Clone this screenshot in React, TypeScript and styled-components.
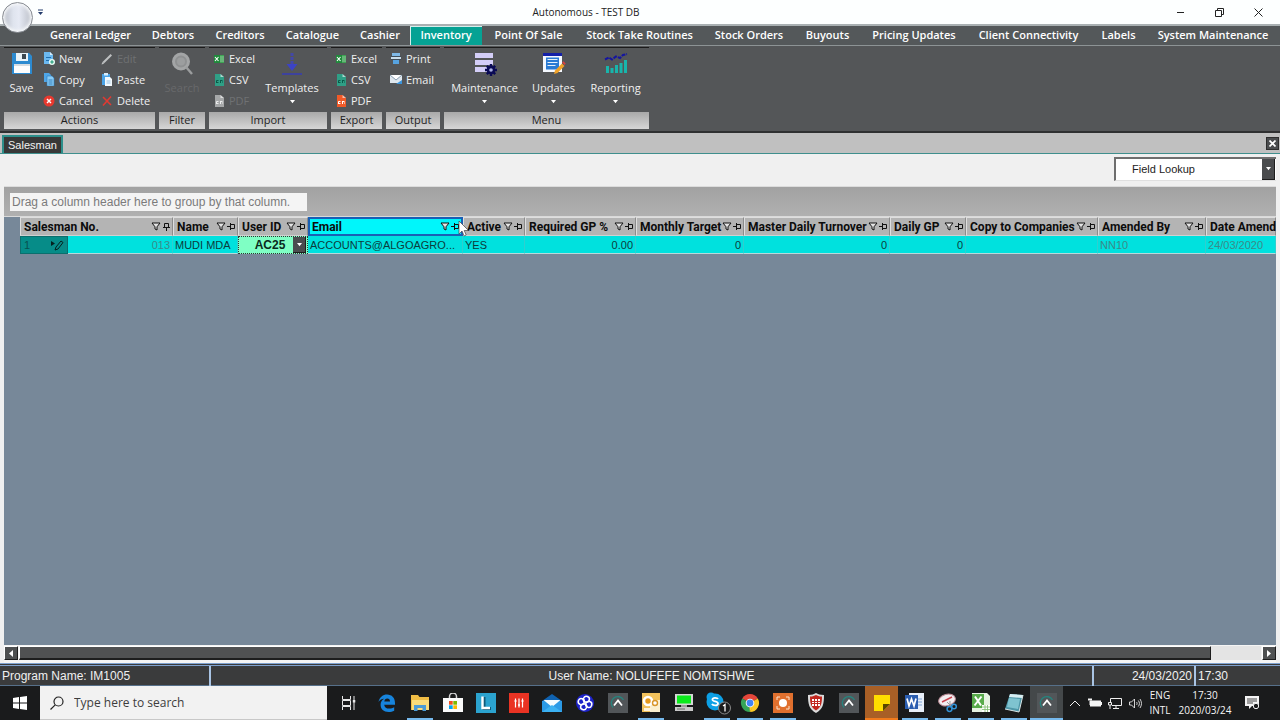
import React from "react";
import styled, { createGlobalStyle, css } from "styled-components";

const UI = `"Open Sans", "Noto Sans", sans-serif`;
const ARIAL = `"Liberation Sans", Arial, sans-serif`;

const GlobalStyle = createGlobalStyle`
  * { box-sizing: border-box; }
  body { margin: 0; background: #f0f0f0; }
  button, select, input { font: inherit; color: inherit; margin: 0; padding: 0; border: 0; background: none; border-radius: 0; }
  svg { display: block; flex: none; }
`;

const Window = styled.div`
  position: relative;
  display: flex;
  flex-direction: column;
  min-height: 100vh;
  overflow: hidden;
  font-family: ${UI};
  font-size: 11px;
  line-height: 16px;
`;

/* Title bar */

const TitleBar = styled.header`
  display: grid;
  grid-template-columns: 1fr auto 1fr;
  align-items: center;
  height: 24px;
  background: #fdffff;
  color: #222;
`;
const QuickAccess = styled.button`
  justify-self: start;
  && { margin-left: 37px; }
`;
const Title = styled.h1`
  margin: 0;
  padding-right: 108px;
  font-size: 10px;
  font-weight: 400;
`;
const WindowButtons = styled.div`
  display: flex;
  justify-self: end;
  padding-right: 2px;
`;
const WindowButton = styled.button`
  display: flex;
  align-items: center;
  justify-content: center;
  width: 39px;
  height: 24px;
`;
const Orb = styled.button`
  position: absolute;
  z-index: 2;
  left: 2px;
  top: 2px;
  width: 31px;
  height: 31px;
  && {
    border: 1px solid #8b8f95;
    border-radius: 50%;
    background: linear-gradient(90deg, #b5bac4 0%, #dfe4ee 35%, #e6eaf4 55%, #b9bdc6 100%);
    box-shadow: inset 0 0 3px 2px #f4f6f8;
  }
`;

/* Module tabs */

const ModuleTabs = styled.nav`
  display: flex;
  height: 22px;
  padding: 0 1px 0 40px;
  border-top: 2px solid #a9b0b2;
  border-bottom: 1px solid #8d9395;
  background: #54585a;
`;
const ModuleTab = styled.button<{ $w: number; $active?: boolean }>`
  && {
    flex: ${(p) => p.$w} 1 0;
    padding-bottom: 2px;
    color: #fff;
    font-size: 11px;
    font-weight: 600;
    white-space: nowrap;
    background: ${(p) => (p.$active ? "#05a294" : "transparent")};
    box-shadow: ${(p) => (p.$active ? "inset 1px 1px 0 #d7efec" : "none")};
  }
`;

/* Ribbon */

const Ribbon = styled.section`
  display: flex;
  gap: 4px;
  height: 87px;
  padding: 1px 3px 2px 4px;
  border-bottom: 2px solid #2f3031;
  background: #545658;
  color: #f0f0f0;
`;
const Group = styled.div<{ $w: number }>`
  display: flex;
  flex-direction: column;
  width: ${(p) => p.$w}px;
  border-top: 1px solid #1b1b1b;
`;
const GroupBody = styled.div`
  display: flex;
  flex: 1;
`;
const GroupLabel = styled.div`
  height: 17px;
  background: linear-gradient(#a9a9a9, #d6d6d6);
  color: #1f1f1f;
  text-align: center;
`;
const CommandColumn = styled.div<{ $w: number }>`
  display: flex;
  flex-direction: column;
  width: ${(p) => p.$w}px;
`;
const Command = styled.button`
  display: flex;
  align-items: center;
  gap: 4px;
  height: 21px;
  white-space: nowrap;
  && { padding-left: 4px; }
  &:disabled { color: #6f7173; }
`;
const BigCommand = styled.button<{ $w: number }>`
  display: flex;
  flex-direction: column;
  align-items: center;
  width: ${(p) => p.$w}px;
  && { padding-top: 4px; }
  & > span { margin-top: 4px; }
  & > span + svg { margin-top: 4px; }
  &:disabled { color: #68696b; }
`;

/* Document tabs and lookup bar */

const DocumentTabs = styled.div`
  display: flex;
  justify-content: space-between;
  align-items: flex-end;
  height: 21px;
  padding: 0 1px 0 2px;
  border-bottom: 1px solid #3f8f8d;
  background: #c0c0c0;
  font-family: ${ARIAL};
`;
const DocumentTab = styled.button`
  && {
    height: 18px;
    padding: 0 4px;
    border: 2px solid #2c8f8b;
    border-bottom: 0;
    background: #383838;
    color: #f2f2f2;
  }
`;
const CloseTab = styled.button`
  display: flex;
  align-items: center;
  justify-content: center;
  align-self: center;
  width: 13px;
  height: 13px;
  && { background: #4a4c4e; border: 1px solid #2d2d2d; }
`;
const LookupBar = styled.div`
  display: flex;
  justify-content: flex-end;
  height: 32px;
  padding: 3px 4px 0;
  background: #f0f0f0;
`;
const LookupBox = styled.div`
  display: flex;
  width: 162px;
  height: 24px;
  padding-right: 1px;
  border: 2px solid #6e6e6e;
  border-right: 0;
  border-bottom: 1px solid #e0e0e0;
  background: #fff;
  font-family: ${ARIAL};
`;
const LookupSelect = styled.select`
  appearance: none;
  flex: 1;
  min-width: 0;
  && { padding: 0 0 2px 16px; color: #222; }
`;
const DropMark = styled.span`
  display: flex;
  align-items: center;
  justify-content: center;
  width: 13px;
  background: #4a4c4e;
  border-right: 1px solid #1d1d1d;
  border-bottom: 1px solid #1d1d1d;
  pointer-events: none;
`;

/* Data grid */

const GridPanel = styled.main`
  display: flex;
  flex: 1;
  flex-direction: column;
  margin: 0 4px;
  border-top: 1px solid #dcdcdc;
  overflow: hidden;
  background: #778899;
  font-family: ${ARIAL};
`;
const GroupByBar = styled.div`
  display: flex;
  align-items: center;
  height: 30px;
  padding: 0 6px;
  border-bottom: 1px solid #d9d9d9;
  background: linear-gradient(#a2a2a2, #b0b0b0);
`;
const GroupByHint = styled.span`
  width: 297px;
  height: 18px;
  padding-left: 2px;
  background: #f4f4f4;
  color: #7b7b7b;
  font-size: 12px;
  line-height: 18px;
`;
const Table = styled.table`
  width: calc(100% - 16px);
  margin-left: 16px;
  border-collapse: separate;
  border-spacing: 0;
  table-layout: fixed;
`;
const HeadCell = styled.th<{ $active?: boolean }>`
  position: relative;
  height: 19px;
  padding: 0;
  border: 1px solid;
  border-color: #dedede #8c8c8c #d0d0d0 #dedede;
  background: #b4b4b4;
  color: #0c0c0c;
  font-family: Roboto, ${ARIAL};
  font-size: 12px;
  font-weight: 700;
  text-align: left;
  ${(p) =>
    p.$active &&
    css`
      border: 2px solid #1a5fb4;
      background: #00f6fb;
    `}
`;
const HeadContent = styled.div<{ $active?: boolean }>`
  display: flex;
  align-items: center;
  gap: 1px;
  height: ${(p) => (p.$active ? 15 : 17)}px;
  padding: 0 1px 0 ${(p) => (p.$active ? 2 : 3)}px;
  white-space: nowrap;
  & > span { flex: 1; min-width: 0; }
`;
const Cell = styled.td<{ $right?: boolean; $dim?: boolean }>`
  height: 18px;
  padding: 0 2px;
  border-right: 1px solid #2fcfcf;
  border-bottom: 1px solid #b7d9da;
  background: #00e1de;
  color: ${(p) => (p.$dim ? "#3c8a88" : "#0d3b3b")};
  font-size: 11px;
  text-align: ${(p) => (p.$right ? "right" : "left")};
  white-space: nowrap;
`;
const RowMarker = styled.th`
  padding: 0 3px;
  border: 1px solid #0b6f6d;
  background: #068c88;
  color: #075250;
  font-size: 11px;
  font-weight: 400;
`;
const RowMarkerContent = styled.div`
  display: flex;
  justify-content: space-between;
  align-items: center;
`;
const EditCell = styled.td`
  padding: 0;
`;
const EditBox = styled.div`
  display: flex;
  height: 18px;
  padding-right: 1px;
  border: 1px dotted #333;
  background: #7fffc4;
`;
const EditSelect = styled.select`
  appearance: none;
  flex: 1;
  min-width: 0;
  && {
    color: #0a2a1c;
    font-size: 12px;
    font-weight: 700;
    text-align-last: center;
    padding-left: 8px;
  }
`;
const Pointer = styled.svg`
  position: absolute;
  z-index: 3;
  top: 1px;
  right: -9px;
`;

/* Scroll bar */

const ScrollBar = styled.div`
  display: flex;
  gap: 1px;
  height: 18px;
  margin: 0 4px;
  padding: 1px 0 3px;
  background: #f4f4f4;
`;
const ScrollArrow = styled.button`
  display: flex;
  align-items: center;
  justify-content: center;
  width: 14px;
  && {
    background: #4e5051;
    border: 1px solid #fff;
    border-right-color: #1d1d1d;
    border-bottom-color: #1d1d1d;
  }
`;
const ScrollTrack = styled.div`
  flex: 1;
  background: #e4e4e4;
`;
const ScrollThumb = styled.div`
  width: 96%;
  height: 100%;
  background: #505152;
  border: 1px solid #fff;
  border-right-color: #1d1d1d;
  border-bottom: 2px solid #1d1d1d;
`;

/* Status bar */

const StatusBar = styled.footer`
  display: grid;
  grid-template-columns: 211px 1fr 102px 84px;
  height: 23px;
  border-top: 3px double #7ea1cf;
  border-bottom: 1px solid #56708a;
  background: #3a3b3c;
  color: #f0f0f0;
  font-family: ${ARIAL};
  font-size: 12px;
  line-height: 20px;
`;
const StatusCell = styled.div<{ $align?: string }>`
  padding: 0 2px;
  border-right: 2px solid #a9c4e4;
  text-align: ${(p) => p.$align || "left"};
  white-space: nowrap;
  &:last-child { border-right: 0; }
`;

/* Taskbar */

const Taskbar = styled.div`
  display: flex;
  height: 34px;
  background: #1a1b1c;
  color: #f5f5f5;
`;
const TaskButton = styled.button<{ $w?: number; $bg?: string }>`
  display: flex;
  align-items: center;
  justify-content: center;
  width: ${(p) => p.$w || 33}px;
  && { background: ${(p) => p.$bg || "transparent"}; }
`;
const AppButton = styled(TaskButton)<{ $line?: string }>`
  && {
    border-top: 2px solid transparent;
    border-bottom: 2px solid transparent;
    background: linear-gradient(${(p) => p.$line || "transparent"}, ${(p) => p.$line || "transparent"}) center bottom /
      ${(p) => (p.$bg ? "100%" : "26px")} 2px no-repeat border-box ${(p) => p.$bg || "transparent"};
  }
`;
const SearchBox = styled.label`
  display: flex;
  align-items: center;
  gap: 10px;
  width: 287px;
  padding-left: 10px;
  border-bottom: 1px solid #c8c8c8;
  background: #f2f2f2;
`;
const SearchInput = styled.input`
  flex: 1;
  min-width: 0;
  && { font-size: 12px; }
  &::placeholder { color: #3d3d3d; opacity: 1; }
`;
const Tray = styled.div`
  display: flex;
  margin-left: auto;
  padding-right: 11px;
`;
const TrayText = styled.div<{ $w: number }>`
  width: ${(p) => p.$w}px;
  padding-top: 2px;
  font-size: 10px;
  line-height: 15px;
  text-align: center;
`;

/* Icons */

const Caret = ({ color = "#fff" }: { color?: string }) => (
  <svg width="7" height="4" viewBox="0 0 7 4"><path d="M1 0h5L3.500 3.200z" fill={color} /></svg>
);
const SaveIcon = () => (
  <svg width="24" height="24" viewBox="0 0 24 24">
    <path d="M2 1h17l3 3v18H2z" fill="#2c8ad0" />
    <path d="M6 1h12v8H6z" fill="#e8f2f8" /><path d="M12 2h4v5h-4z" fill="#3b4750" />
    <path d="M4 12h16v9H4z" fill="#fdfdfd" /><path d="M4 12h16v2H4z" fill="#d5dce2" />
  </svg>
);
const NewIcon = () => (
  <svg width="12" height="13" viewBox="0 0 12 13">
    <path d="M1 0h6l3 3v9H1z" fill="#6cb9f0" /><path d="M7 0l3 3H7z" fill="#d6ecfb" />
    <path d="M3 5.500h5M3 8.500h3" stroke="#1f6fb0" /><circle cx="9" cy="10" r="3" fill="#e9fbf5" />
    <path d="M9 8.200v3.600M7.200 10h3.600" stroke="#1e9b79" strokeWidth="1.200" />
  </svg>
);
const CopyIcon = () => (
  <svg width="12" height="13" viewBox="0 0 12 13">
    <path d="M1 0h5l2 2v7H1z" fill="#4fa6e8" /><path d="M4 3h5l2 2v8H4z" fill="#8accf6" stroke="#2a78b8" strokeWidth=".6" />
    <path d="M5.500 7h4M5.500 9h4M5.500 11h4" stroke="#1f6fb0" strokeWidth=".8" />
  </svg>
);
const CancelIcon = () => (
  <svg width="12" height="12" viewBox="0 0 12 12">
    <circle cx="6" cy="6" r="5.500" fill="#e8392f" /><path d="M4 4l4 4M8 4l-4 4" stroke="#fff" strokeWidth="1.400" />
  </svg>
);
const EditIcon = () => (
  <svg width="12" height="12" viewBox="0 0 12 12"><path d="M2.200 9.800L10.300 1.700" stroke="#bfc1c2" strokeWidth="2" /><path d="M.5 11.500l.8-2.600 1.800 1.800z" fill="#bfc1c2" /></svg>
);
const PasteIcon = () => (
  <svg width="12" height="13" viewBox="0 0 12 13">
    <path d="M1 1h8v11H1z" fill="#4ba3e6" /><path d="M3 0h4v2.500H3z" fill="#d8ecfa" />
    <path d="M4 4h5l2 2v7H4z" fill="#f3f9fd" /><path d="M5.500 8h4M5.500 10h4" stroke="#7db5de" strokeWidth=".8" />
  </svg>
);
const DeleteIcon = () => (
  <svg width="12" height="12" viewBox="0 0 12 12"><path d="M2 2l8 8M10 1.500L2 10.500" stroke="#e03a32" strokeWidth="1.600" /></svg>
);
const SearchBigIcon = () => (
  <svg width="24" height="24" viewBox="0 0 24 24">
    <circle cx="11" cy="9.500" r="7.500" fill="#8f9192" stroke="#a3a5a6" strokeWidth="3" /><circle cx="11" cy="9.500" r="4" fill="#9c9e9f" />
    <path d="M16 15l6 7" stroke="#9b9d9e" strokeWidth="2.400" />
  </svg>
);
const ExcelIcon = () => (
  <svg width="12" height="12" viewBox="0 0 12 12">
    <path d="M1 2h6v8H1z" fill="#1f8a3b" /><path d="M7 2h4v8H7z" fill="#3fa354" />
    <path d="M2 4l3.500 4M5.500 4L2 8" stroke="#fff" strokeWidth="1.100" /><path d="M7.500 4h1M9.500 4h1M7.500 6h1M9.500 6h1M7.500 8h1M9.500 8h1" stroke="#dff3e3" strokeWidth="1" />
  </svg>
);
const FileIcon = ({ color, mark }: { color: string; mark: string }) => (
  <svg width="12" height="13" viewBox="0 0 12 13">
    <path d="M2 1h5.500L11 4v9H2z" fill={color} /><path d="M7.500 1L11 4H7.500z" fill="#fff" opacity=".6" />
    <path d="M3.500 7.500h2M3.500 7.500v2.500M3.500 9.500h2M7 7.500h2.500M7.500 7.500v2.500M9.500 8.500v1" stroke={mark} strokeWidth="1" fill="none" />
  </svg>
);
const TemplatesIcon = () => (
  <svg width="24" height="24" viewBox="0 0 24 24">
    <path d="M12 1v12" stroke="#4348a8" strokeWidth="3" strokeDasharray="3 1" /><path d="M6.500 12h11L12 19z" fill="#3c43c4" />
    <path d="M2 22h20" stroke="#3d429d" strokeWidth="2" />
  </svg>
);
const PrintIcon = () => (
  <svg width="12" height="13" viewBox="0 0 12 13">
    <path d="M2 1h8v3H2z" fill="#7fb8e6" /><path d="M1 4h10v4H1z" fill="#3f4c58" /><path d="M1 5h10v2H1z" fill="#c9dcea" />
    <path d="M3 8h6v4H3z" fill="#57a3e0" />
  </svg>
);
const EmailIcon = () => (
  <svg width="12" height="11" viewBox="0 0 12 11">
    <path d="M0 1h12v8H0z" fill="#dfe7ee" /><path d="M0 1l6 5 6-5" fill="#fff" stroke="#7c93a8" strokeWidth=".9" />
    <path d="M6 10l6-4v4z" fill="#3a94dc" />
  </svg>
);
const MaintenanceIcon = () => (
  <svg width="24" height="24" viewBox="0 0 24 24">
    <path d="M2 1h18v5H2zM2 8h18v5H2zM2 15h12v5H2z" fill="#d4cef8" />
    <g transform="translate(18 18)">
      <circle r="4.200" fill="#0a0a55" />
      <path d="M0-6V6M-6 0H6M-4.200-4.200L4.200 4.200M4.200-4.200L-4.200 4.200" stroke="#0a0a55" strokeWidth="2.400" /><circle r="1.800" fill="#aab0e0" />
    </g>
  </svg>
);
const UpdatesIcon = () => (
  <svg width="24" height="24" viewBox="0 0 24 24">
    <path d="M1 1h19v19H1z" fill="#f4f8ff" /><path d="M1 1h19v3H1z" fill="#1420a8" />
    <path d="M4 5.500h13v12H4z" fill="#2a7bd4" /><path d="M5.500 7.500h10M5.500 10.500h10M5.500 13.500h8" stroke="#e6f1fc" />
    <path d="M12 22l1-3.500 7-7 2.500 2.500-7 7z" fill="#f0a22a" /><path d="M20 10.500l1.500-1.200 2.200 2.200L22.500 13z" fill="#d94040" />
  </svg>
);
const ReportingIcon = () => (
  <svg width="24" height="24" viewBox="0 0 24 24">
    <path d="M2 21v-7h3v7zM6.500 21v-5h3v5zM11 21v-8h3v8zM15.500 21v-10h3v10zM20 21V8h3v13z" fill="#18b5ac" />
    <path d="M1 7.500l4-2 3 2 4-3 4 1.500 3-3 4-1" stroke="#1414a0" strokeWidth="2" fill="none" strokeDasharray="4 1" />
  </svg>
);
const Funnel = () => (
  <svg width="10" height="9" viewBox="0 0 10 9"><path d="M1 1h8L6 4.800V8L4 7V4.800z" fill="#e4e4e4" stroke="#111" strokeWidth="1" /></svg>
);
const Pin = ({ upright }: { upright?: boolean }) => (
  <svg width="9" height="9" viewBox="0 0 9 9">
    <g transform={upright ? "rotate(-90 4.500 4.500)" : undefined} stroke="#111" fill="none">
      <path d="M0 4.500h3M3.500 1v7M3.500 2.500h4v4h-4" />
    </g>
  </svg>
);
const AutonomousIcon = () => (
  <svg width="20" height="20" viewBox="0 0 20 20">
    <path d="M0 0h20v20H0z" fill="#525659" /><path d="M5 14.500A6.500 6.500 0 1 1 15.500 7" stroke="#27837d" strokeWidth="1.400" fill="none" />
    <path d="M6 12.500L10 7.500 14 12.500" stroke="#fff" strokeWidth="1.800" fill="none" />
  </svg>
);

const apps: { name: string; line?: string; bg?: string; icon: React.ReactNode }[] = [
  { name: "Edge", icon: <svg width="20" height="20" viewBox="0 0 20 20"><path d="M1.500 9C2.500 4 6 1.500 10 1.500c5 0 8 3.500 8 8.500v1.700H7.200c.3 2.600 2.300 3.900 5 3.900 2 0 3.600-.5 5-1.300v3.400c-1.600.9-3.500 1.300-5.600 1.300-5 0-8-2.900-8-7.200 0-2.700 1.300-4.800 3.600-6-3 .2-4.700 1.500-5.700 3.200zM7.300 8.500H13c0-2-1-3-2.700-3S7.600 6.500 7.300 8.500z" fill="#1784dc" /></svg> },
  { name: "File Explorer", line: "#76b9ed", icon: <svg width="20" height="20" viewBox="0 0 20 20"><path d="M1 2h7l1.500 2H19v13H1z" fill="#f0bd45" /><path d="M2 7h17v10H2z" fill="#fbdc7b" /><path d="M4 18v-6h12v6h-3.500v-3h-5v3z" fill="#4c9bd6" /></svg> },
  { name: "Store", icon: <svg width="20" height="20" viewBox="0 0 20 20"><path d="M6.500 6V3.500a3.500 3.500 0 0 1 7 0V6" stroke="#d4d4d4" fill="none" strokeWidth="1.500" /><path d="M0 5h20v14H0z" fill="#fbfbfb" /><path d="M6 8h3.700v3.700H6z" fill="#f25022" /><path d="M10.300 8H14v3.700h-3.700z" fill="#7fba00" /><path d="M6 12.300h3.700V16H6z" fill="#00a4ef" /><path d="M10.300 12.300H14V16h-3.700z" fill="#ffb900" /></svg> },
  { name: "Lookup", icon: <svg width="20" height="20" viewBox="0 0 20 20"><path d="M0 0h20v20H0z" fill="#2ba3cf" /><path d="M8 4v11.500h7" stroke="#125a78" strokeWidth="3" fill="none" /><path d="M6.500 3.500V15h7.500" stroke="#fff" strokeWidth="2.400" fill="none" /></svg> },
  { name: "Mixer", icon: <svg width="20" height="20" viewBox="0 0 20 20"><path d="M0 0h20v20H0z" fill="#ea3323" /><path d="M6.500 5.500v9M10 5.500v9M13.500 5.500v9" stroke="#fff" strokeWidth="1.200" /><path d="M5.500 8h2M9 12h2M12.500 8h2" stroke="#fff" strokeWidth="1.400" /></svg> },
  { name: "Mail", icon: <svg width="20" height="20" viewBox="0 0 20 20"><path d="M0 8l10-7 10 7z" fill="#0f62b0" /><path d="M0 8h20v11H0z" fill="#2b9ae6" /><path d="M1.500 7h17L10 14z" fill="#f4fbff" /><path d="M0 19l10-7 10 7z" fill="#3bb1f2" /></svg> },
  { name: "Network", icon: <svg width="20" height="20" viewBox="0 0 20 20"><circle cx="10" cy="10" r="9" fill="#1c22c8" /><g stroke="#fff" strokeWidth="1.500" fill="none" transform="rotate(20 10 10)"><circle cx="10" cy="6" r="3" /><circle cx="14" cy="10" r="3" /><circle cx="10" cy="14" r="3" /><circle cx="6" cy="10" r="3" /></g></svg> },
  { name: "Autonomous", icon: <AutonomousIcon /> },
  { name: "Outlook", line: "#76b9ed", icon: <svg width="20" height="20" viewBox="0 0 20 20"><path d="M1 0h18v19H1z" fill="#f2c25c" /><path d="M9 7h10v12H9z" fill="#fbf0cf" /><circle cx="7" cy="8" r="4" stroke="#fff" strokeWidth="2.600" fill="#e79a1a" /><circle cx="14" cy="10" r="2.500" stroke="#d8962a" strokeWidth="1.400" fill="#fff" /><path d="M3 15h7v3H3z" fill="#fff4da" /></svg> },
  { name: "Remote PC", icon: <svg width="20" height="20" viewBox="0 0 20 20"><path d="M1 1h18v11H1z" fill="#d6d6d6" /><path d="M3 2.500h14v8H3z" fill="#0bea1c" /><path d="M7 12h6v2H7z" fill="#9b9b9b" /><path d="M1 14h18v4H1z" fill="#c8c8c8" /><path d="M3 16h8" stroke="#666" /></svg> },
  { name: "Skype", line: "#76b9ed", icon: <svg width="28" height="24" viewBox="0 0 28 24"><circle cx="12" cy="11" r="8.500" fill="#0ca0e6" /><circle cx="8" cy="6" r="4.500" fill="#0ca0e6" /><path d="M15 8c-.6-1.400-5.400-2-5.600.6-.1 2.300 5.600 1.400 5.600 3.900 0 2.700-5.300 2.300-6 .4" stroke="#fff" strokeWidth="1.800" fill="none" /><circle cx="21.500" cy="17" r="6" fill="#1a1b1c" stroke="#8a8a8a" /><path d="M20 15l2-1.500V20.500" stroke="#fff" strokeWidth="1.300" fill="none" /></svg> },
  { name: "Chrome", line: "#76b9ed", icon: <svg width="20" height="20" viewBox="0 0 20 20"><path d="M10 10L2.200 5.500A9 9 0 0 1 17.800 5.500z" fill="#e5463a" /><path d="M10 10L2.200 5.500A9 9 0 0 0 10 19z" fill="#35a457" /><path d="M10 10h0l7.800-4.500A9 9 0 0 1 10 19l4-9z" fill="#fbc926" /><path d="M9 10h6l-5 9z" fill="#fbc926" /><circle cx="10" cy="10" r="4.300" fill="#fff" /><circle cx="10" cy="10" r="3.400" fill="#4285f4" /></svg> },
  { name: "Screen Capture", line: "#76b9ed", icon: <svg width="20" height="20" viewBox="0 0 20 20"><path d="M0 0h20v20H0z" fill="#e0702e" /><path d="M4 7V4h3M13 4h3v3M16 13v3h-3M7 16H4v-3" stroke="#fbe3d0" fill="none" /><circle cx="10" cy="10" r="4" fill="#fff" /></svg> },
  { name: "Security", icon: <svg width="18" height="20" viewBox="0 0 18 20"><path d="M1 2c4 0 6-1 8-2 2 1 4 2 8 2 0 9-1 14-8 18C2 16 1 11 1 2z" fill="#dcdcdc" /><path d="M3 3.500c3 0 4.500-.7 6-1.500 1.500.8 3 1.500 6 1.500 0 7-1 11-6 14-5-3-6-7-6-14z" fill="#c2271f" /><path d="M5 6h8v7H5z" fill="#fff" /><path d="M5 8.500h8M5 10.500h8M7.500 6v7M10.500 6v7" stroke="#c2271f" /></svg> },
  { name: "Autonomous Client", icon: <AutonomousIcon /> },
  { name: "Sticky Notes", line: "#f07a1c", bg: "#a85f26", icon: <svg width="16" height="16" viewBox="0 0 16 16"><path d="M0 0h16v9l-7 7H0z" fill="#ffdd00" /><path d="M9 16V9h7z" fill="#594700" /></svg> },
  { name: "Word", line: "#76b9ed", icon: <svg width="20" height="20" viewBox="0 0 20 20"><path d="M4 0h15v19H4z" fill="#e9f0fa" /><path d="M13 6h4M13 9h4M13 12h4" stroke="#7ea4d6" /><path d="M0 2h13v14H0z" fill="#2a5db0" /><path d="M2 5.500l2 7.500 2.500-7 2.500 7 2-7.500" stroke="#fff" strokeWidth="1.700" fill="none" /></svg> },
  { name: "Snipping Tool", line: "#76b9ed", icon: <svg width="20" height="20" viewBox="0 0 20 20"><ellipse cx="9" cy="7" rx="8.500" ry="5.800" fill="#f3eef0" stroke="#b98a94" transform="rotate(-15 9 7)" /><path d="M4 9l10-5" stroke="#c8434e" strokeWidth="1.500" /><path d="M9 9l4 4M12 8v5" stroke="#999" /><circle cx="11.500" cy="16" r="2.400" stroke="#3292d6" strokeWidth="1.500" fill="none" /><circle cx="16" cy="13.500" r="2.300" stroke="#3292d6" strokeWidth="1.500" fill="none" /></svg> },
  { name: "Excel", line: "#76b9ed", icon: <svg width="20" height="20" viewBox="0 0 20 20"><path d="M1 0h15l3 3v16H1z" fill="#e6f3e2" /><path d="M1 1h12v14H1z" fill="#58ab4b" /><path d="M4 3.500l6 9M10.500 3.500l-7 9" stroke="#fff" strokeWidth="2" /><path d="M11 12h8v7h-8z" fill="#fff" /><path d="M11 14h8M11 16.500h8M14 12v7M16.500 12v7" stroke="#7bbb6d" strokeWidth=".8" /></svg> },
  { name: "Notepad", line: "#76b9ed", icon: <svg width="20" height="20" viewBox="0 0 20 20"><path d="M6 1l13 1-4 17L1 16z" fill="#4f97a8" /><path d="M6 1l13 1-1 3-13-1z" fill="#d8eef2" /><path d="M5 5l11 1-2 10-11-2z" fill="#7fc3d0" /><path d="M1 16l14 3 4-17" stroke="#d9e6e8" fill="none" /></svg> },
  { name: "Autonomous Inventory", line: "#76b9ed", bg: "#44484a", icon: <AutonomousIcon /> },
];

const modules: [string, number][] = [
  ["General Ledger", 101], ["Debtors", 64], ["Creditors", 70], ["Catalogue", 75], ["Cashier", 60],
  ["Inventory", 72], ["Point Of Sale", 93], ["Stock Take Routines", 129], ["Stock Orders", 90],
  ["Buyouts", 67], ["Pricing Updates", 106], ["Client Connectivity", 123], ["Labels", 57], ["System Maintenance", 132],
];

const columns: { title: string; span?: number; active?: boolean; upright?: boolean; plain?: boolean }[] = [
  { title: "Salesman No.", span: 2, upright: true }, { title: "Name" }, { title: "User ID" },
  { title: "Email", active: true }, { title: "Active" }, { title: "Required GP %" }, { title: "Monthly Target" },
  { title: "Master Daily Turnover" }, { title: "Daily GP" }, { title: "Copy to Companies" },
  { title: "Amended By" }, { title: "Date Amend", plain: true },
];
const columnWidths: (number | undefined)[] = [48, 105, 65, 70, 155, 62, 111, 108, 146, 76, 132, 108, undefined];

const Cmd = ({ icon, label, disabled }: { icon: React.ReactNode; label: string; disabled?: boolean }) => (
  <Command type="button" disabled={disabled}>{icon}<span>{label}</span></Command>
);

export default function App() {
  return (
    <Window>
      <GlobalStyle />
      <Orb type="button" aria-label="Application menu" />
      <TitleBar>
        <QuickAccess type="button" aria-label="Quick access">
          <svg width="7" height="7" viewBox="0 0 7 7"><path d="M1 1h5" stroke="#223a6a" /><path d="M1 3h5L3.500 6z" fill="#223a6a" /></svg>
        </QuickAccess>
        <Title>Autonomous - TEST DB</Title>
        <WindowButtons>
          <WindowButton type="button" aria-label="Minimise"><svg width="9" height="9" viewBox="0 0 9 9"><path d="M1 4.500h7" stroke="#222" /></svg></WindowButton>
          <WindowButton type="button" aria-label="Restore"><svg width="9" height="9" viewBox="0 0 9 9"><path d="M.5 2.500h6v6h-6zM2.500 2V.5h6v6H7" stroke="#222" fill="none" /></svg></WindowButton>
          <WindowButton type="button" aria-label="Close"><svg width="9" height="9" viewBox="0 0 9 9"><path d="M.5.5l8 8M8.500.5l-8 8" stroke="#222" /></svg></WindowButton>
        </WindowButtons>
      </TitleBar>

      <ModuleTabs>
        {modules.map(([name, w]) => (
          <ModuleTab key={name} type="button" $w={w} $active={name === "Inventory"}>{name}</ModuleTab>
        ))}
      </ModuleTabs>

      <Ribbon>
        <Group $w={151}>
          <GroupBody>
            <BigCommand type="button" $w={35}><SaveIcon /><span>Save</span></BigCommand>
            <CommandColumn $w={58}>
              <Cmd icon={<NewIcon />} label="New" />
              <Cmd icon={<CopyIcon />} label="Copy" />
              <Cmd icon={<CancelIcon />} label="Cancel" />
            </CommandColumn>
            <CommandColumn $w={58}>
              <Cmd icon={<EditIcon />} label="Edit" disabled />
              <Cmd icon={<PasteIcon />} label="Paste" />
              <Cmd icon={<DeleteIcon />} label="Delete" />
            </CommandColumn>
          </GroupBody>
          <GroupLabel>Actions</GroupLabel>
        </Group>
        <Group $w={46}>
          <GroupBody><BigCommand type="button" $w={46} disabled><SearchBigIcon /><span>Search</span></BigCommand></GroupBody>
          <GroupLabel>Filter</GroupLabel>
        </Group>
        <Group $w={118}>
          <GroupBody>
            <CommandColumn $w={50}>
              <Cmd icon={<ExcelIcon />} label="Excel" />
              <Cmd icon={<FileIcon color="#2f9f86" mark="#0b5a49" />} label="CSV" />
              <Cmd icon={<FileIcon color="#a6a8a9" mark="#eceded" />} label="PDF" disabled />
            </CommandColumn>
            <BigCommand type="button" $w={66}><TemplatesIcon /><span>Templates</span><Caret /></BigCommand>
          </GroupBody>
          <GroupLabel>Import</GroupLabel>
        </Group>
        <Group $w={51}>
          <GroupBody>
            <CommandColumn $w={51}>
              <Cmd icon={<ExcelIcon />} label="Excel" />
              <Cmd icon={<FileIcon color="#2f9f86" mark="#0b5a49" />} label="CSV" />
              <Cmd icon={<FileIcon color="#f05a28" mark="#fff" />} label="PDF" />
            </CommandColumn>
          </GroupBody>
          <GroupLabel>Export</GroupLabel>
        </Group>
        <Group $w={54}>
          <GroupBody>
            <CommandColumn $w={54}>
              <Cmd icon={<PrintIcon />} label="Print" />
              <Cmd icon={<EmailIcon />} label="Email" />
            </CommandColumn>
          </GroupBody>
          <GroupLabel>Output</GroupLabel>
        </Group>
        <Group $w={205}>
          <GroupBody>
            <BigCommand type="button" $w={81}><MaintenanceIcon /><span>Maintenance</span><Caret /></BigCommand>
            <BigCommand type="button" $w={57}><UpdatesIcon /><span>Updates</span><Caret /></BigCommand>
            <BigCommand type="button" $w={67}><ReportingIcon /><span>Reporting</span><Caret /></BigCommand>
          </GroupBody>
          <GroupLabel>Menu</GroupLabel>
        </Group>
      </Ribbon>

      <DocumentTabs>
        <DocumentTab type="button">Salesman</DocumentTab>
        <CloseTab type="button" aria-label="Close tab">
          <svg width="7" height="7" viewBox="0 0 7 7"><path d="M.5.5l6 6M6.500.5l-6 6" stroke="#fff" strokeWidth="1.700" /></svg>
        </CloseTab>
      </DocumentTabs>
      <LookupBar>
        <LookupBox>
          <LookupSelect aria-label="Field lookup"><option>Field Lookup</option></LookupSelect>
          <DropMark><Caret /></DropMark>
        </LookupBox>
      </LookupBar>

      <GridPanel>
        <GroupByBar><GroupByHint>Drag a column header here to group by that column.</GroupByHint></GroupByBar>
        <Table>
          <colgroup>{columnWidths.map((w, i) => <col key={i} width={w} />)}</colgroup>
          <thead>
            <tr>
              {columns.map((c) => (
                <HeadCell key={c.title} colSpan={c.span} $active={c.active} scope="col">
                  <HeadContent $active={c.active}>
                    <span>{c.title}</span>
                    {!c.plain && <Funnel />}
                    {!c.plain && <Pin upright={c.upright} />}
                  </HeadContent>
                  {c.active && (
                    <Pointer width="12" height="18" viewBox="0 0 12 18">
                      <path d="M1 1v13l3-3 2.200 5 2-1L6.200 10.500H10.500z" fill="#fff" stroke="#444" strokeWidth=".7" />
                    </Pointer>
                  )}
                </HeadCell>
              ))}
            </tr>
          </thead>
          <tbody>
            <tr>
              <RowMarker scope="row">
                <RowMarkerContent>
                  1
                  <svg width="14" height="11" viewBox="0 0 14 11"><path d="M1 1l4 2.500-4 2.500z" fill="#04211f" /><path d="M5 10l1-3 5-6 2 1.500-5 6.500z" fill="none" stroke="#04211f" /></svg>
                </RowMarkerContent>
              </RowMarker>
              <Cell $right $dim>013</Cell>
              <Cell>MUDI MDA</Cell>
              <EditCell>
                <EditBox>
                  <EditSelect aria-label="User ID"><option>AC25</option></EditSelect>
                  <DropMark><Caret /></DropMark>
                </EditBox>
              </EditCell>
              <Cell>ACCOUNTS@ALGOAGRO...</Cell>
              <Cell>YES</Cell>
              <Cell $right>0.00</Cell>
              <Cell $right>0</Cell>
              <Cell $right>0</Cell>
              <Cell $right>0</Cell>
              <Cell />
              <Cell $dim>NN10</Cell>
              <Cell $dim>24/03/2020</Cell>
            </tr>
          </tbody>
        </Table>
      </GridPanel>
      <ScrollBar>
        <ScrollArrow type="button" aria-label="Scroll left"><svg width="4" height="7" viewBox="0 0 4 7"><path d="M4 0v7L0 3.500z" fill="#fff" /></svg></ScrollArrow>
        <ScrollTrack><ScrollThumb /></ScrollTrack>
        <ScrollArrow type="button" aria-label="Scroll right"><svg width="4" height="7" viewBox="0 0 4 7"><path d="M0 0v7l4-3.500z" fill="#fff" /></svg></ScrollArrow>
      </ScrollBar>

      <StatusBar>
        <StatusCell>Program Name: IM1005</StatusCell>
        <StatusCell $align="center">User Name: NOLUFEFE NOMTSHWE</StatusCell>
        <StatusCell $align="right">24/03/2020</StatusCell>
        <StatusCell>17:30</StatusCell>
      </StatusBar>

      <Taskbar>
        <TaskButton type="button" aria-label="Start" $w={40}>
          <svg width="14" height="14" viewBox="0 0 14 14"><path d="M0 2l6-.9v5.400H0zM7 .9L14 0v6.500H7zM0 7.500h6v5.400L0 12zM7 7.500h7V14l-7-.9z" fill="#fff" /></svg>
        </TaskButton>
        <SearchBox>
          <svg width="14" height="14" viewBox="0 0 14 14"><circle cx="8.500" cy="5.500" r="4.500" stroke="#222" fill="none" strokeWidth="1.200" /><path d="M5.200 8.800L.5 13.500" stroke="#222" strokeWidth="1.200" /></svg>
          <SearchInput type="text" aria-label="Search" placeholder="Type here to search" />
        </SearchBox>
        <TaskButton type="button" aria-label="Task view" $w={43}>
          <svg width="14" height="14" viewBox="0 0 14 14"><path d="M.5 0v3.500h8V0M.5 4.500h8v5h-8zM.5 14v-3.500h8V14M12 0v14" stroke="#e8e8e8" fill="none" /><path d="M10.800 4h2.500v2.500h-2.500z" fill="#e8e8e8" /></svg>
        </TaskButton>
        {apps.map((a) => (
          <AppButton key={a.name} type="button" aria-label={a.name} $line={a.line} $bg={a.bg}>{a.icon}</AppButton>
        ))}
        <Tray>
          <TaskButton type="button" aria-label="Show hidden icons" $w={20}><svg width="12" height="7" viewBox="0 0 12 7"><path d="M1 6l5-5 5 5" stroke="#f0f0f0" fill="none" /></svg></TaskButton>
          <TaskButton type="button" aria-label="Battery" $w={20}><svg width="14" height="10" viewBox="0 0 14 10"><path d="M2 2.500h11v6H2z" fill="#f4f4f4" /><path d="M13 4h1v3h-1z" fill="#f4f4f4" /><path d="M0 1.500h4M1 0v3M3 0v3M2 3v4" stroke="#f4f4f4" /></svg></TaskButton>
          <TaskButton type="button" aria-label="Network" $w={20}><svg width="14" height="12" viewBox="0 0 14 12"><path d="M2.500 1.500h11v7h-11zM8 8.500v3M5 11.500h6" stroke="#f0f0f0" fill="none" /><path d="M0 5h4v6H1V8H0z" fill="#1a1b1c" /><path d="M.5 5.500h3v2.500h-3zM2 8v4" stroke="#f0f0f0" fill="none" /></svg></TaskButton>
          <TaskButton type="button" aria-label="Volume" $w={20}><svg width="13" height="11" viewBox="0 0 13 11"><path d="M.5 4h2L5.500 1v9L2.500 7h-2zM7.500 4c.8 1 .8 2 0 3M9.300 2.500c1.500 2 1.500 4 0 6M11 1c2 3 2 6 0 9" stroke="#e8e8e8" fill="none" strokeWidth=".9" /></svg></TaskButton>
          <TrayText $w={30}>ENG<br />INTL</TrayText>
          <TrayText $w={60}>17:30<br />2020/03/24</TrayText>
          <TaskButton type="button" aria-label="Notifications" $w={34}><svg width="14" height="14" viewBox="0 0 14 14"><path d="M0 0h14v10h-7l-3 3v-3H0z" fill="#f4f4f4" /><path d="M2 3h10M2 5h10M2 7h6" stroke="#333" strokeWidth=".9" /><circle cx="11" cy="10" r="2.700" fill="#1a1b1c" stroke="#f4f4f4" /></svg></TaskButton>
        </Tray>
      </Taskbar>
    </Window>
  );
}
